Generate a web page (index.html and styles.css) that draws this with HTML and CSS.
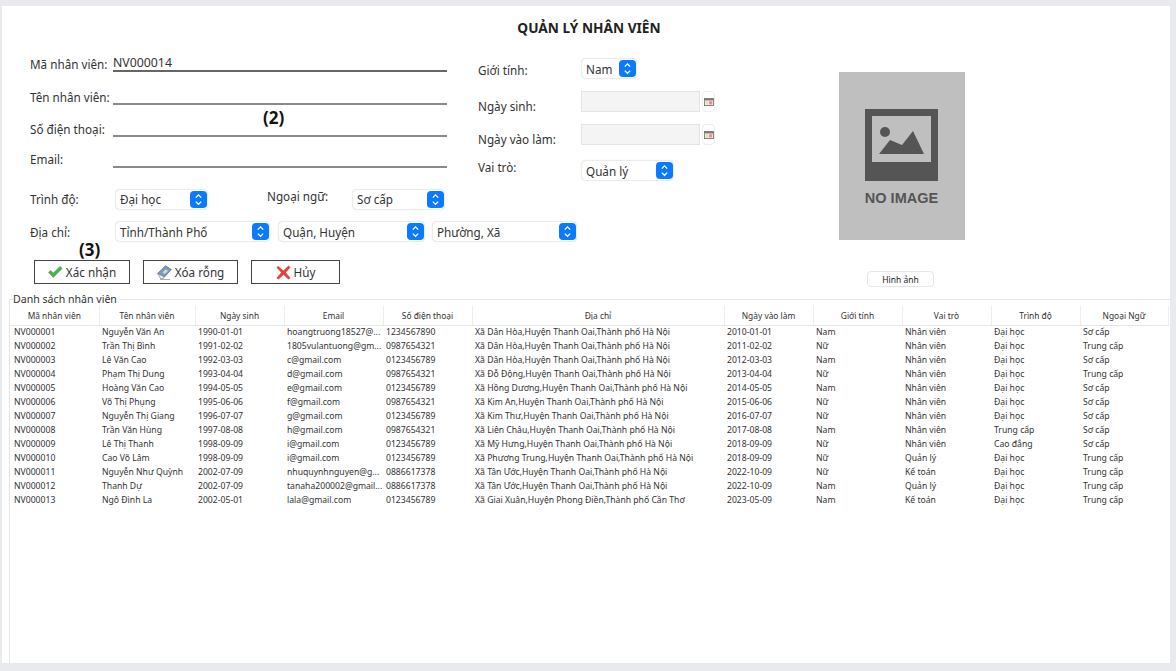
FILE: index.html
```html
<!DOCTYPE html>
<html>
<head>
	<title>Quản lý nhân viên</title>
	<meta charset="utf-8">
	<link rel="stylesheet" href="styles.css">
</head>
<body>
	<svg class="defs" width="0" height="0">
		<symbol id="chev" viewBox="0 0 17 17">
			<rect width="17" height="17" rx="4" fill="#0a7bff"/>
			<path d="M5.8 6.600 8.500 3.900l2.700 2.700M5.800 10.600l2.700 2.700 2.700-2.700" fill="none" stroke="#fff" stroke-width="1.300"/>
		</symbol>
		<symbol id="cal" viewBox="0 0 12 10">
			<rect x=".5" y=".5" width="11" height="9" fill="#f3ece4" stroke="#6a6a6a"/>
			<rect x="1" y="1" width="10" height="2" fill="#777"/>
			<rect x="2" y="4" width="3" height="4" fill="#e8dcae"/>
			<rect x="6" y="4" width="4" height="4" fill="#ee8a8a"/>
		</symbol>
	</svg>
	<div class="panel">
		<h1 class="title">QUẢN LÝ NHÂN VIÊN</h1>
		<div class="form-area">
			<div class="form-main">
				<div class="form-upper">
					<div class="col-left">
						<div class="line-row row1"><label>Mã nhân viên:</label><div class="line-input">NV000014</div></div>
						<div class="line-row row2"><label>Tên nhân viên:</label><div class="line-input"></div></div>
						<div class="line-row row3"><label>Số điện thoại:</label><div class="line-input"></div></div>
						<div class="line-row row4"><label>Email:</label><div class="line-input"></div></div>
						<div class="select-row">
							<label class="lbl-85">Trình độ:</label>
							<div class="combo w93"><span>Đại học</span><svg class="chev"><use href="#chev"/></svg></div>
							<label class="lbl-ngoaingu">Ngoại ngữ:</label>
							<div class="combo w93"><span>Sơ cấp</span><svg class="chev"><use href="#chev"/></svg></div>
						</div>
					</div>
					<div class="col-mid">
						<div class="mid-row">
							<label class="lbl-low2">Giới tính:</label>
							<div class="combo w56"><span>Nam</span><svg class="chev"><use href="#chev"/></svg></div>
						</div>
						<div class="mid-row">
							<label class="lbl-low">Ngày sinh:</label>
							<div class="date-input"></div>
							<div class="date-btn"><svg class="cal"><use href="#cal"/></svg></div>
						</div>
						<div class="mid-row">
							<label class="lbl-low">Ngày vào làm:</label>
							<div class="date-input"></div>
							<div class="date-btn"><svg class="cal"><use href="#cal"/></svg></div>
						</div>
						<div class="mid-row role-row">
							<label class="lbl-high">Vai trò:</label>
							<div class="combo w93"><span>Quản lý</span><svg class="chev"><use href="#chev"/></svg></div>
						</div>
					</div>
				</div>
				<div class="addr-row">
					<label class="lbl-85">Địa chỉ:</label>
					<div class="combo w155"><span>Tỉnh/Thành Phố</span><svg class="chev"><use href="#chev"/></svg></div>
					<div class="combo w147"><span>Quận, Huyện</span><svg class="chev"><use href="#chev"/></svg></div>
					<div class="combo w145"><span>Phường, Xã</span><svg class="chev"><use href="#chev"/></svg></div>
				</div>
				<div class="btn-row">
					<button class="btn w96">
						<svg width="15" height="12" viewBox="0 0 16 13"><path d="M0 7l2.600-2.600 3 3L13 0l2.600 2.600L5.600 12.600z" fill="#4cb04f"/></svg>Xác nhận
					</button>
					<button class="btn w95">
						<svg width="15" height="15" viewBox="0 0 15 15"><path d="M.7 8.500 8.500.8l5.800 3.700-7 7.500z" fill="#6f9fd0" stroke="#55708c" stroke-width=".8"/><path d="M5.500 7.500 8.700 4.300l2.400 1.500-3.200 3.300z" fill="#e9d98c"/><path d="M.7 8.500 7.300 12l-1 1.500H3.500z" fill="#eee" stroke="#777" stroke-width=".6"/><path d="M3 14.500h10" stroke="#999" stroke-width=".8"/></svg>Xóa rỗng
					</button>
					<button class="btn w89">
						<svg width="15" height="15" viewBox="0 0 15 15"><path d="M2 1l5.500 4.600L12.500 .5l2 2L9.800 7.500l4.700 5.500-2 1.500-5-4.800-5 4.800-2-1.500 4.700-5.500L.5 2.500z" fill="#e8403a"/></svg>Hủy
					</button>
				</div>
				<div class="note note-2">(2)</div>
				<div class="note note-3">(3)</div>
			</div>
			<div class="photo-col">
				<div class="photo">
					<svg class="photo-icon" width="73" height="72" viewBox="0 0 73 72">
						<rect width="73" height="72" fill="#555"/>
						<rect x="7" y="7" width="59" height="46" fill="#bfbfbf"/>
						<circle cx="20" cy="23" r="5" fill="#555"/>
						<path d="M14 45 25 31 37 36 48 22 59 45z" fill="#555"/>
					</svg>
					<div class="no-image">NO IMAGE</div>
				</div>
				<button class="photo-btn">Hình ảnh</button>
			</div>
		</div>
		<fieldset class="list-box">
			<legend>Danh sách nhân viên</legend>
			<table class="staff">
				<colgroup>
					<col class="c89"><col class="c96"><col class="c89"><col class="c99"><col class="c89"><col class="c252"><col class="c89"><col class="c89"><col class="c89"><col class="c89"><col class="c88">
				</colgroup>
				<thead>
					<tr><th>Mã nhân viên</th><th>Tên nhân viên</th><th>Ngày sinh</th><th>Email</th><th>Số điện thoại</th><th>Địa chỉ</th><th>Ngày vào làm</th><th>Giới tính</th><th>Vai trò</th><th>Trình độ</th><th>Ngoại Ngữ</th></tr>
				</thead>
				<tbody>
					<tr><td>NV000001</td><td>Nguyễn Văn An</td><td>1990-01-01</td><td>hoangtruong18527@...</td><td>1234567890</td><td>Xã Dân Hòa,Huyện Thanh Oai,Thành phố Hà Nội</td><td>2010-01-01</td><td>Nam</td><td>Nhân viên</td><td>Đại học</td><td>Sơ cấp</td></tr>
					<tr><td>NV000002</td><td>Trần Thị Bình</td><td>1991-02-02</td><td>1805vulantuong@gm...</td><td>0987654321</td><td>Xã Dân Hòa,Huyện Thanh Oai,Thành phố Hà Nội</td><td>2011-02-02</td><td>Nữ</td><td>Nhân viên</td><td>Đại học</td><td>Trung cấp</td></tr>
					<tr><td>NV000003</td><td>Lê Văn Cao</td><td>1992-03-03</td><td>c@gmail.com</td><td>0123456789</td><td>Xã Dân Hòa,Huyện Thanh Oai,Thành phố Hà Nội</td><td>2012-03-03</td><td>Nam</td><td>Nhân viên</td><td>Đại học</td><td>Sơ cấp</td></tr>
					<tr><td>NV000004</td><td>Phạm Thị Dung</td><td>1993-04-04</td><td>d@gmail.com</td><td>0987654321</td><td>Xã Đỗ Động,Huyện Thanh Oai,Thành phố Hà Nội</td><td>2013-04-04</td><td>Nữ</td><td>Nhân viên</td><td>Đại học</td><td>Trung cấp</td></tr>
					<tr><td>NV000005</td><td>Hoàng Văn Cao</td><td>1994-05-05</td><td>e@gmail.com</td><td>0123456789</td><td>Xã Hồng Dương,Huyện Thanh Oai,Thành phố Hà Nội</td><td>2014-05-05</td><td>Nam</td><td>Nhân viên</td><td>Đại học</td><td>Sơ cấp</td></tr>
					<tr><td>NV000006</td><td>Võ Thị Phụng</td><td>1995-06-06</td><td>f@gmail.com</td><td>0987654321</td><td>Xã Kim An,Huyện Thanh Oai,Thành phố Hà Nội</td><td>2015-06-06</td><td>Nữ</td><td>Nhân viên</td><td>Đại học</td><td>Sơ cấp</td></tr>
					<tr><td>NV000007</td><td>Nguyễn Thị Giang</td><td>1996-07-07</td><td>g@gmail.com</td><td>0123456789</td><td>Xã Kim Thư,Huyện Thanh Oai,Thành phố Hà Nội</td><td>2016-07-07</td><td>Nữ</td><td>Nhân viên</td><td>Đại học</td><td>Sơ cấp</td></tr>
					<tr><td>NV000008</td><td>Trần Văn Hùng</td><td>1997-08-08</td><td>h@gmail.com</td><td>0987654321</td><td>Xã Liên Châu,Huyện Thanh Oai,Thành phố Hà Nội</td><td>2017-08-08</td><td>Nam</td><td>Nhân viên</td><td>Trung cấp</td><td>Sơ cấp</td></tr>
					<tr><td>NV000009</td><td>Lê Thị Thanh</td><td>1998-09-09</td><td>i@gmail.com</td><td>0123456789</td><td>Xã Mỹ Hưng,Huyện Thanh Oai,Thành phố Hà Nội</td><td>2018-09-09</td><td>Nữ</td><td>Nhân viên</td><td>Cao đẳng</td><td>Sơ cấp</td></tr>
					<tr><td>NV000010</td><td>Cao Võ Lâm</td><td>1998-09-09</td><td>i@gmail.com</td><td>0123456789</td><td>Xã Phương Trung,Huyện Thanh Oai,Thành phố Hà Nội</td><td>2018-09-09</td><td>Nữ</td><td>Quản lý</td><td>Đại học</td><td>Trung cấp</td></tr>
					<tr><td>NV000011</td><td>Nguyễn Như Quỳnh</td><td>2002-07-09</td><td>nhuquynhnguyen@g...</td><td>0886617378</td><td>Xã Tân Ước,Huyện Thanh Oai,Thành phố Hà Nội</td><td>2022-10-09</td><td>Nữ</td><td>Kế toán</td><td>Đại học</td><td>Trung cấp</td></tr>
					<tr><td>NV000012</td><td>Thanh Dự</td><td>2002-07-09</td><td>tanaha200002@gmail...</td><td>0886617378</td><td>Xã Tân Ước,Huyện Thanh Oai,Thành phố Hà Nội</td><td>2022-10-09</td><td>Nam</td><td>Quản lý</td><td>Đại học</td><td>Trung cấp</td></tr>
					<tr><td>NV000013</td><td>Ngô Đình La</td><td>2002-05-01</td><td>lala@gmail.com</td><td>0123456789</td><td>Xã Giai Xuân,Huyện Phong Điền,Thành phố Cần Thơ</td><td>2023-05-09</td><td>Nam</td><td>Kế toán</td><td>Đại học</td><td>Trung cấp</td></tr>
				</tbody>
			</table>
		</fieldset>
	</div>
</body>
</html>
```

FILE: styles.css
```css
*{
	margin:0;
	padding:0;
	box-sizing:border-box;
}
body{
	width:1176px;
	height:671px;
	overflow:hidden;
	background:#e9eaee;
	padding:6px 6px 8px 2px;
	font-family:"Noto Sans","Liberation Sans",sans-serif;
	font-size:11.7px;
	color:#333;
}
.defs{
	position:absolute;
}
.panel{
	height:100%;
	background:#fff;
	display:flex;
	flex-direction:column;
}
.title{
	height:44px;
	line-height:44px;
	text-align:center;
	font-size:13.7px;
	font-weight:700;
	color:#222;
	padding-left:6px;
}
.form-area{
	display:flex;
	height:242px;
}
.form-main{
	position:relative;
	width:690px;
	margin-left:28px;
}
.form-upper{
	display:flex;
}
.col-left{
	width:417px;
}
.line-row{
	display:flex;
	align-items:flex-end;
}
.line-row label{
	width:83px;
	line-height:16px;
	white-space:nowrap;
}
.line-input{
	flex:1;
	height:22px;
	padding-top:6px;
	line-height:14px;
	font-size:12.3px;
	border-bottom:2px solid #8a8a8a;
}
.row1{height:22px;}
.row1 .line-input{border-bottom-color:#666;}
.row2{height:33px;}
.row3{height:32px;}
.row4{height:31px;}
.row4 label{padding-bottom:1px;}
.select-row{
	display:flex;
	align-items:center;
	margin-top:20px;
}
.lbl-85{
	width:85px;
}
.lbl-ngoaingu{
	width:85px;
	margin-left:59px;
	padding-bottom:6px;
}
.combo{
	height:21px;
	display:flex;
	align-items:center;
	justify-content:space-between;
	padding:0 0 0 4px;
	background:#fff;
	border:1px solid #ececec;
	border-radius:5px;
	box-shadow:0 0 1px #ddd;
	flex-shrink:0;
}
.chev{
	width:17px;
	height:17px;
}
.w56{width:56px;}
.w93{width:93px;}
.w155{width:155px;}
.w147{width:147px;}
.w145{width:145px;}
.col-mid{
	margin-left:31px;
	padding-top:8px;
}
.mid-row{
	display:flex;
	align-items:center;
	height:21px;
	margin-bottom:12px;
}
.mid-row label{
	width:103px;
	white-space:nowrap;
}
.role-row{
	margin-top:15px;
	margin-bottom:0;
}
.lbl-low{padding-top:8px;}
.lbl-low2{padding-top:2px;}
.lbl-high{padding-bottom:7px;}
.date-input{
	width:119px;
	height:21px;
	background:#f4f4f4;
	border:1px solid #e4e4e4;
}
.date-btn{
	width:13px;
	height:21px;
	margin-left:2px;
	display:flex;
	align-items:center;
	justify-content:center;
	border:1px solid #eee;
	border-radius:4px;
}
.cal{
	width:10px;
	height:8px;
}
.addr-row{
	display:flex;
	align-items:center;
	margin-top:11px;
}
.addr-row .w155{margin-right:8px;}
.addr-row .w147{margin-right:7px;}
.btn-row{
	display:flex;
	gap:13px;
	margin-top:18px;
	padding-left:4px;
}
.btn{
	height:24px;
	display:flex;
	align-items:center;
	justify-content:center;
	gap:3px;
	background:#fff;
	border:1px solid #444;
	font:inherit;
	color:#333;
}
.w96{width:96px;}
.w95{width:95px;}
.w89{width:89px;}
.note{
	position:absolute;
	font-size:17px;
	font-weight:700;
	color:#111;
}
.note-2{
	left:233px;
	top:56px;
}
.note-3{
	left:49px;
	top:188px;
}
.photo-col{
	margin-left:119px;
	padding-top:22px;
	width:126px;
}
.photo{
	width:126px;
	height:168px;
	background:#bfbfbf;
	display:flex;
	flex-direction:column;
	align-items:center;
	padding-top:37px;
}
.photo-icon{
	margin-right:1px;
}
.no-image{
	margin-top:9px;
	margin-right:1px;
	font-family:"Liberation Sans",sans-serif;
	font-size:14.5px;
	font-weight:700;
	color:#555;
}
.photo-btn{
	display:block;
	width:67px;
	height:16px;
	margin:31px 0 0 28px;
	background:#fff;
	border:1px solid #e6e6e6;
	border-radius:4px;
	font:inherit;
	font-size:8.5px;
	color:#222;
}
.list-box{
	flex:1;
	min-height:0;
	margin-left:7px;
	border:1px solid #e6e6e6;
	border-right:0;
	border-bottom:0;
}
.list-box legend{
	margin-left:3px;
	padding-right:2px;
	font-size:10.6px;
	line-height:14px;
}
.staff{
	table-layout:fixed;
	width:1158px;
	border-collapse:collapse;
	font-size:8.65px;
	white-space:nowrap;
}
.c89{width:89px;}
.c96{width:96px;}
.c99{width:99px;}
.c252{width:252px;}
.c88{width:88px;}
.staff th{
	height:19px;
	font-size:8.4px;
	font-weight:400;
	border-right:1px solid #eee;
	border-bottom:1px solid #e6e6e6;
}
.staff td{
	height:14px;
	padding:0 0 0 3px;
	overflow:hidden;
}
.staff td:first-child{
	padding-left:4px;
}
```
